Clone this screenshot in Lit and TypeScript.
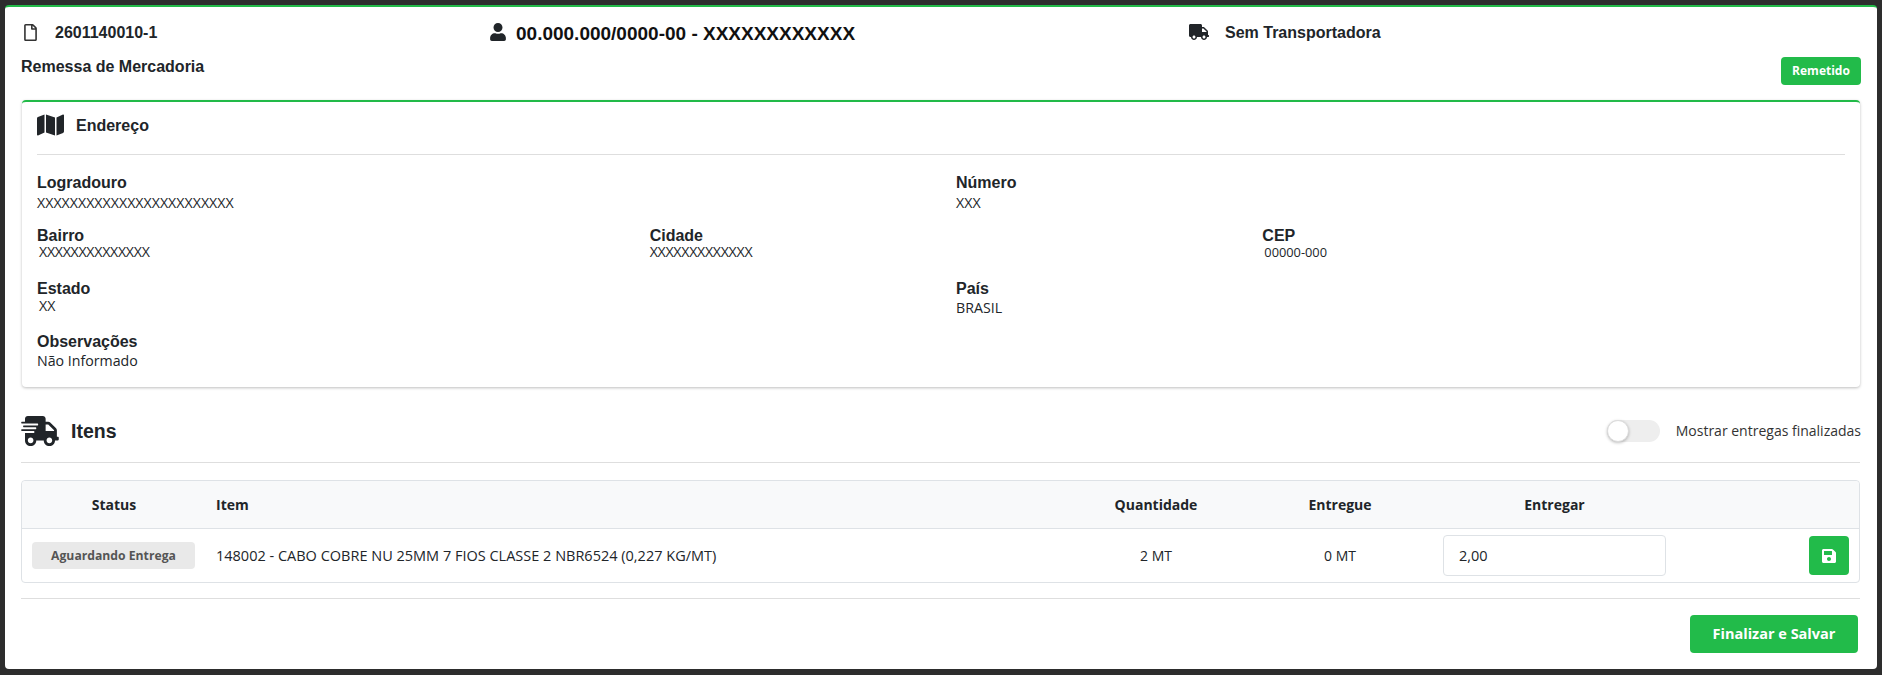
import { LitElement, html, css, svg } from "lit";
import { customElement } from "lit/decorators.js";

const ICONS = {
  file: svg`<path fill="currentColor" d="M369.900 97.900L286 14C277 5 264.800-.1 252.100-.1H48C21.500 0 0 21.500 0 48v416c0 26.500 21.500 48 48 48h288c26.500 0 48-21.500 48-48V131.900c0-12.700-5.100-25-14.100-34zM332.100 128H256V51.900l76.100 76.100zM48 464V48h160v104c0 13.300 10.700 24 24 24h104v288H48z"/>`,
  user: svg`<path fill="currentColor" d="M224 256c70.700 0 128-57.300 128-128S294.700 0 224 0 96 57.300 96 128s57.300 128 128 128zm89.600 32h-16.700c-22.200 10.200-46.900 16-72.900 16s-50.600-5.800-72.900-16h-16.700C60.200 288 0 348.200 0 422.400V464c0 26.500 21.500 48 48 48h352c26.500 0 48-21.500 48-48v-41.600c0-74.200-60.200-134.400-134.400-134.400z"/>`,
  truck: svg`<path fill="currentColor" d="M624 352h-16V243.900c0-12.700-5.100-24.900-14.100-33.900L494 110.100c-9-9-21.200-14.100-33.900-14.100H416V48c0-26.500-21.500-48-48-48H48C21.500 0 0 21.500 0 48v320c0 26.500 21.500 48 48 48h16c0 53 43 96 96 96s96-43 96-96h128c0 53 43 96 96 96s96-43 96-96h48c8.800 0 16-7.200 16-16v-32c0-8.800-7.200-16-16-16zM160 464c-26.500 0-48-21.500-48-48s21.500-48 48-48 48 21.500 48 48-21.500 48-48 48zm320 0c-26.500 0-48-21.500-48-48s21.500-48 48-48 48 21.500 48 48-21.500 48-48 48zm80-208H416V144h44.100l99.900 99.900V256z"/>`,
  map: svg`<path fill="currentColor" d="M0 117.660v346.320c0 11.320 11.430 19.060 21.940 14.860L160 416V32L20.120 87.950A32.006 32.006 0 0 0 0 117.660zM192 416l192 64V96L192 32v384zM554.060 33.160L416 96v384l139.880-55.950A31.996 31.996 0 0 0 576 394.340V48.020c0-11.320-11.430-19.060-21.940-14.860z"/>`,
  fast: svg`<path fill="currentColor" d="M624 352h-16V243.900c0-12.700-5.100-24.900-14.100-33.900L494 110.100c-9-9-21.200-14.100-33.900-14.100H416V48c0-26.500-21.500-48-48-48H112C85.500 0 64 21.500 64 48v48H8c-4.400 0-8 3.600-8 8v16c0 4.400 3.600 8 8 8h272c4.400 0 8 3.600 8 8v16c0 4.400-3.600 8-8 8H40c-4.400 0-8 3.600-8 8v16c0 4.400 3.600 8 8 8h208c4.400 0 8 3.600 8 8v16c0 4.400-3.600 8-8 8H8c-4.400 0-8 3.600-8 8v16c0 4.400 3.600 8 8 8h208c4.400 0 8 3.600 8 8v16c0 4.400-3.600 8-8 8H64v128c0 53 43 96 96 96s96-43 96-96h128c0 53 43 96 96 96s96-43 96-96h48c8.800 0 16-7.200 16-16v-32c0-8.800-7.200-16-16-16zM160 464c-26.500 0-48-21.500-48-48s21.500-48 48-48 48 21.500 48 48-21.500 48-48 48zm320 0c-26.500 0-48-21.500-48-48s21.500-48 48-48 48 21.500 48 48-21.500 48-48 48zm80-208H416V144h44.100l99.900 99.900V256z"/>`,
  save: svg`<path fill="currentColor" d="M433.941 129.941l-83.882-83.882A48 48 0 0 0 316.118 32H48C21.490 32 0 53.490 0 80v352c0 26.510 21.490 48 48 48h352c26.510 0 48-21.490 48-48V163.882a48 48 0 0 0-14.059-33.941zM224 416c-35.346 0-64-28.654-64-64 0-35.346 28.654-64 64-64s64 28.654 64 64c0 35.346-28.654 64-64 64zm96-304.520V212c0 6.627-5.373 12-12 12H76c-6.627 0-12-5.373-12-12V108c0-6.627 5.373-12 12-12h228.520c3.183 0 6.235 1.264 8.485 3.515l3.480 3.480A11.996 11.996 0 0 1 320 111.480z"/>`,
};

const icon = (name: keyof typeof ICONS, vb: string) =>
  html`<svg class="ic" viewBox=${vb} aria-hidden="true">${ICONS[name]}</svg>`;

@customElement("app-root")
export class AppRoot extends LitElement {
  static styles = css`
    :host {
      display: block;
      box-sizing: border-box;
      height: 675px;
      padding: 5px 5px 6px 5px;
      background: #2d2d2d;
      font-family: "Liberation Sans", Arial, sans-serif;
      color: #212529;
    }
    * { box-sizing: border-box; }
    .ic { display: block; flex: none; }
    .shell {
      height: 664px;
      background: #fff;
      border-top: 2px solid #22ba48;
      border-radius: 4px;
      padding: 0 17px 0 16px;
      display: flex;
      flex-direction: column;
    }
    .top {
      display: grid;
      grid-template-columns: 466px 699px 1fr;
      height: 38px;
      padding: 17px 0 0 3px;
      font-weight: 700;
    }
    .top > div { display: flex; align-items: flex-start; }
    .f1 { font-size: 16px; line-height: 18px; gap: 18px; }
    .f1 .ic { width: 13px; height: 17px; color: #333; }
    .f2 { font-size: 19px; line-height: 20px; gap: 10px; color: #111; }
    .f2 .ic { width: 16px; height: 18px; margin-top: -1px; color: #212529; }
    .f3 { font-size: 16px; line-height: 18px; gap: 16px; }
    .f3 .ic { width: 20px; height: 16px; }
    .sub {
      height: 55px;
      display: flex;
      justify-content: space-between;
      align-items: flex-start;
    }
    .sub b { font-size: 16px; line-height: 18px; margin-top: 13px; }
    .badge {
      margin: 12px -1px 0 0;
      width: 80px;
      height: 28px;
      background: #22bb4a;
      color: #fff;
      border-radius: 4px;
      font: 700 12px/28px "Open Sans", sans-serif;
      text-align: center;
    }
    .card {
      height: 287px;
      margin-left: 1px;
      border-top: 2px solid #22ba48;
      border-radius: 4px;
      box-shadow: 0 1px 3px rgba(0, 0, 0, .26);
      padding: 0 15px;
      flex: none;
    }
    .card-head {
      height: 53px;
      display: flex;
      align-items: flex-start;
      gap: 12px;
      padding-top: 11px;
      border-bottom: 1px solid #dedede;
      font-size: 16px;
      font-weight: 700;
    }
    .card-head .ic { width: 27px; height: 24px; }
    .card-head span { line-height: 20px; margin-top: 3px; }
    .grid { display: grid; column-gap: 30px; height: 53px; align-content: start; }
    .c2 { grid-template-columns: 1fr 1fr; }
    .c3 { grid-template-columns: 1fr 1fr 1fr; }
    .first { margin-top: 19px; }
    .lab { font-size: 16px; font-weight: 700; line-height: 18px; }
    .val { font: 400 14.2px/18px "Open Sans", sans-serif; color: #212529; }
    .first .val { margin-top: 2px; }
    .tight .val { margin-top: -2px; letter-spacing: -.3px; }
    .tight .small { letter-spacing: 0; }
    .snug .x { margin-top: -1px; }
    .snug .y, .last .val { margin-top: 1px; }
    .ind { padding-left: 2px; }
    .small { font-size: 12.8px; }
    .head {
      display: flex;
      align-items: center;
      height: 60px;
      margin-top: 16px;
      border-bottom: 1px solid #dedede;
      padding-bottom: 4px;
    }
    .head .ic { width: 38px; height: 30px; margin-right: 12px; color: #212529; }
    .head h2 { margin: 0; font-size: 19.5px; line-height: 24px; font-weight: 700; }
    .sw { margin: 0 -1px 0 auto; display: flex; align-items: center; font: 400 14px/20px "Open Sans", sans-serif; color: #333; gap: 16px; }
    .track { position: relative; width: 53px; height: 22px; border-radius: 11px; background: #eeeeee; }
    .knob { position: absolute; left: 0; top: 0; width: 22px; height: 22px; border-radius: 50%; background: #fff; border: 1px solid #dcdcdc; box-shadow: 0 1px 3px rgba(0,0,0,.25); }
    .tbl {
      margin-top: 17px;
      height: 103px;
      border: 1px solid #dee2e6;
      border-radius: 4px;
      flex: none;
      font-family: "Open Sans", sans-serif;
      font-size: 14px;
    }
    .row {
      display: grid;
      grid-template-columns: 184px 858px 184px 184px 245px 1fr;
      align-items: center;
    }
    .thead { height: 48px; background: #f8f9fa; border-bottom: 1px solid #dee2e6; font-weight: 700; border-radius: 4px 4px 0 0; }
    .tbody { height: 53px; }
    .ctr { text-align: center; }
    .item { padding-left: 10px; }
    .tbody .item { font-size: 14.5px; }
    .pill {
      width: 163px;
      height: 27px;
      margin-left: 10px;
      background: #e9e9e9;
      border-radius: 4px;
      color: #555;
      font-weight: 700;
      font-size: 12.2px;
      line-height: 27px;
      text-align: center;
      white-space: nowrap;
    }
    .in {
      width: 223px;
      height: 41px;
      border: 1px solid #dee2e6;
      border-radius: 4px;
      padding: 0 15px;
      font: 400 14.5px/39px "Open Sans", sans-serif;
      color: #212529;
      justify-self: center;
    }
    .saveb {
      justify-self: end;
      margin-right: 10px;
      width: 40px;
      height: 39px;
      background: #22bb4a;
      border-radius: 4px;
      display: flex;
      align-items: center;
      justify-content: center;
      color: #fff;
    }
    .saveb .ic { width: 14px; height: 16px; }
    .foot {
      margin-top: 15px;
      border-top: 1px solid #dedede;
      display: flex;
      justify-content: flex-end;
      padding: 16px 2px 0 0;
    }
    .go {
      width: 168px;
      height: 38px;
      background: #22bb4a;
      color: #fff;
      border-radius: 4px;
      font: 700 14.5px/38px "Open Sans", sans-serif;
      text-align: center;
    }
  `;

  render() {
    return html`
      <div class="shell">
        <div class="top">
          <div class="f1">${icon("file", "0 0 384 512")}<span>2601140010-1</span></div>
          <div class="f2">${icon("user", "0 0 448 512")}<span>00.000.000/0000-00 - XXXXXXXXXXXX</span></div>
          <div class="f3">${icon("truck", "0 0 640 512")}<span>Sem Transportadora</span></div>
        </div>
        <div class="sub"><b>Remessa de Mercadoria</b><div class="badge">Remetido</div></div>
        <section class="card">
          <div class="card-head">${icon("map", "0 0 576 512")}<span>Endereço</span></div>
          <div class="grid c2 first">
            <div><div class="lab">Logradouro</div><div class="val">XXXXXXXXXXXXXXXXXXXXXXXX</div></div>
            <div><div class="lab">Número</div><div class="val">XXX</div></div>
          </div>
          <div class="grid c3 tight">
            <div><div class="lab">Bairro</div><div class="val ind">XXXXXXXXXXXXXX</div></div>
            <div><div class="lab">Cidade</div><div class="val">XXXXXXXXXXXXX</div></div>
            <div><div class="lab">CEP</div><div class="val ind small">00000-000</div></div>
          </div>
          <div class="grid c2 snug">
            <div><div class="lab">Estado</div><div class="val x ind">XX</div></div>
            <div><div class="lab">País</div><div class="val y">BRASIL</div></div>
          </div>
          <div class="grid c2 last">
            <div><div class="lab">Observações</div><div class="val">Não Informado</div></div>
          </div>
        </section>
        <div class="head">
          ${icon("fast", "0 0 640 512")}
          <h2>Itens</h2>
          <div class="sw"><span class="track"><span class="knob"></span></span><span>Mostrar entregas finalizadas</span></div>
        </div>
        <div class="tbl">
          <div class="row thead">
            <div class="ctr">Status</div><div class="item">Item</div><div class="ctr">Quantidade</div><div class="ctr">Entregue</div><div class="ctr">Entregar</div><div></div>
          </div>
          <div class="row tbody">
            <div class="pill">Aguardando Entrega</div>
            <div class="item">148002 - CABO COBRE NU 25MM 7 FIOS CLASSE 2 NBR6524 (0,227 KG/MT)</div>
            <div class="ctr">2 MT</div>
            <div class="ctr">0 MT</div>
            <div class="in">2,00</div>
            <div class="saveb">${icon("save", "0 0 448 512")}</div>
          </div>
        </div>
        <div class="foot"><div class="go">Finalizar e Salvar</div></div>
      </div>
    `;
  }
}
